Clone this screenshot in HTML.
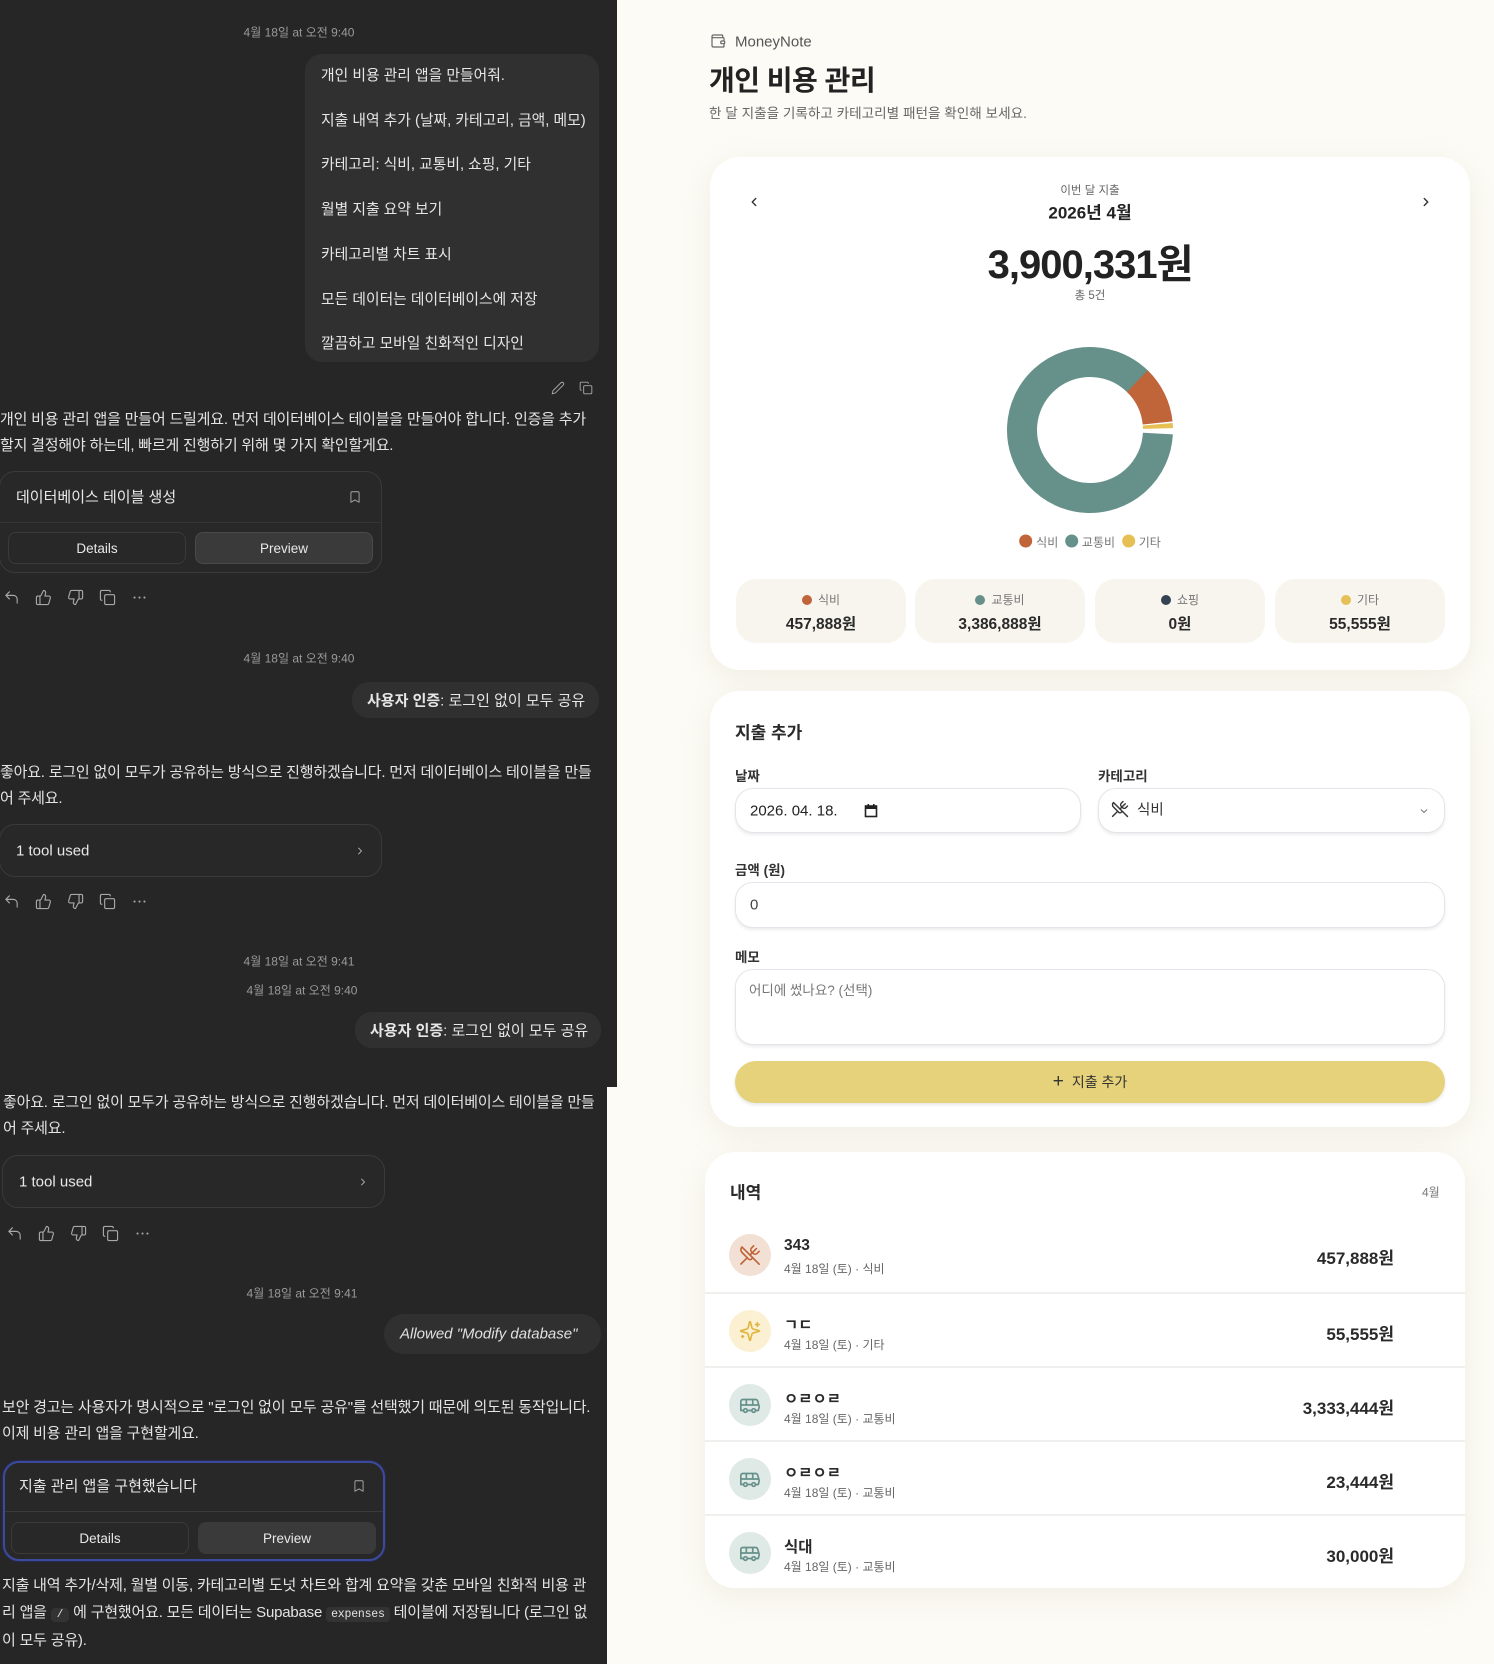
<!DOCTYPE html>
<html><head><meta charset="utf-8">
<style>
*{box-sizing:border-box;margin:0;padding:0}
html,body{width:1494px;height:1664px;overflow:hidden}
body{background:#fcfbf6;font-family:"Liberation Sans","Noto Sans CJK KR",sans-serif;position:relative}
.a{position:absolute;white-space:nowrap}
#dark{position:absolute;left:0;top:0;width:617px;height:1087px;background:#262626}
#dark2{position:absolute;left:0;top:1087px;width:607px;height:577px;background:#262626}
.ts{color:#9a9a9a;font-size:12px;transform:translate(-50%,-50%)}
.bub{background:#303030;border-radius:17px;color:#e6e6e6}
.txt{color:#e4e4e4;font-size:15px;letter-spacing:-0.2px}
.cl{transform:translateY(-50%)}
.card{border:1px solid #3a3a3a;border-radius:16px;background:#282828}
.btn{border:1px solid #3a3a3a;border-radius:8px;color:#e8e8e8;font-size:13.5px;display:flex;align-items:center;justify-content:center}
.ic{stroke:#a8a8a8;fill:none;stroke-width:1.6;stroke-linecap:round;stroke-linejoin:round}
.wc{position:absolute;background:#fff;border-radius:30px;box-shadow:0 8px 30px rgba(200,195,160,0.22)}
.lbl{font-size:13.5px;font-weight:bold;color:#333}
.inp{position:absolute;background:#fff;border:1px solid #e6e4ea;border-radius:18px;box-shadow:0 2px 3px rgba(0,0,0,0.08)}
.stat{position:absolute;top:579px;width:170px;height:64px;background:#f7f5ee;border-radius:20px;text-align:center}
.stat .t{font-size:12px;color:#777;margin-top:12px}
.stat .v{font-size:15.5px;font-weight:bold;color:#2a2a2a;margin-top:4px}
.dot{display:inline-block;width:10px;height:10px;border-radius:50%;margin-right:6px;vertical-align:-1px}
.row{position:absolute;left:705px;width:760px;height:74px;border-top:2px solid #f1f0ee}
.circ{position:absolute;left:24px;top:16px;width:42px;height:42px;border-radius:50%;display:flex;align-items:center;justify-content:center}
.nm{position:absolute;left:79px;top:19px;font-size:15.5px;font-weight:bold;color:#2a2a2a}
.sb{position:absolute;left:79px;top:42px;font-size:12px;color:#666}
.am{position:absolute;right:71px;top:26px;font-size:17px;font-weight:bold;color:#2a2a2a}
</style></head><body>
<div id="dark"></div><div id="dark2"></div>

<!-- LEFT CHAT -->
<div class="a ts" style="left:299px;top:32px">4월 18일 at 오전 9:40</div>
<div class="a bub" style="left:305px;top:54px;width:294px;height:308px"></div>
<div class="a" style="left:321px;top:54px;color:#e6e6e6;font-size:14.8px;line-height:44.7px">개인 비용 관리 앱을 만들어줘.<br>지출 내역 추가 (날짜, 카테고리, 금액, 메모)<br>카테고리: 식비, 교통비, 쇼핑, 기타<br>월별 지출 요약 보기<br>카테고리별 차트 표시<br>모든 데이터는 데이터베이스에 저장<br>깔끔하고 모바일 친화적인 디자인</div>
<svg class="a" style="left:551px;top:381px" width="14" height="14" viewBox="0 0 24 24"><path class="ic" d="M17 3a2.8 2.8 0 0 1 4 4L7.5 20.5 2 22l1.5-5.5Z"/></svg>
<svg class="a" style="left:579px;top:381px" width="14" height="14" viewBox="0 0 24 24"><rect class="ic" x="8" y="8" width="14" height="14" rx="2"/><path class="ic" d="M4 16c-1.1 0-2-.9-2-2V4c0-1.1.9-2 2-2h10c1.1 0 2 .9 2 2"/></svg>

<div class="a txt" style="left:0;top:407px;line-height:25.5px">개인 비용 관리 앱을 만들어 드릴게요. 먼저 데이터베이스 테이블을 만들어야 합니다. 인증을 추가<br>할지 결정해야 하는데, 빠르게 진행하기 위해 몇 가지 확인할게요.</div>

<div class="a card" style="left:-1px;top:471px;width:383px;height:102px"></div>
<div class="a" style="left:16px;top:486px;color:#e8e8e8;font-size:15px">데이터베이스 테이블 생성</div>
<svg class="a" style="left:348px;top:489px" width="14" height="16" viewBox="0 0 24 24"><path class="ic" d="M19 21l-7-4-7 4V5a2 2 0 0 1 2-2h10a2 2 0 0 1 2 2z"/></svg>
<div class="a" style="left:0;top:522px;width:382px;height:1px;background:#353535"></div>
<div class="a btn" style="left:8px;top:532px;width:178px;height:32px">Details</div>
<div class="a btn" style="left:195px;top:532px;width:178px;height:32px;background:#3a3a3a;border-color:#4a4a4a">Preview</div>

<div class="a" style="left:3px;top:589px">
<svg class="a" style="left:0" width="17" height="17" viewBox="0 0 24 24"><path class="ic" d="M9 14 4 9l5-5M4 9h10.5a5.5 5.5 0 0 1 5.5 5.5V20"/></svg>
<svg class="a" style="left:32px" width="17" height="17" viewBox="0 0 24 24"><path class="ic" d="M7 10v12M15 5.9 14 10h5.8a2 2 0 0 1 1.9 2.6l-2.3 8A2 2 0 0 1 17.4 22H4a2 2 0 0 1-2-2v-8a2 2 0 0 1 2-2h2.8a2 2 0 0 0 1.8-1.1L12 2a3.1 3.1 0 0 1 3 3.9Z"/></svg>
<svg class="a" style="left:64px" width="17" height="17" viewBox="0 0 24 24"><path class="ic" d="M17 14V2M9 18.1 10 14H4.2a2 2 0 0 1-1.9-2.6l2.3-8A2 2 0 0 1 6.6 2H20a2 2 0 0 1 2 2v8a2 2 0 0 1-2 2h-2.8a2 2 0 0 0-1.8 1.1L12 22a3.1 3.1 0 0 1-3-3.9Z"/></svg>
<svg class="a" style="left:96px" width="17" height="17" viewBox="0 0 24 24"><rect class="ic" x="8" y="8" width="14" height="14" rx="2"/><path class="ic" d="M4 16c-1.1 0-2-.9-2-2V4c0-1.1.9-2 2-2h10c1.1 0 2 .9 2 2"/></svg>
<svg class="a" style="left:128px" width="17" height="17" viewBox="0 0 24 24"><circle cx="5" cy="12" r="1.5" fill="#a8a8a8"/><circle cx="12" cy="12" r="1.5" fill="#a8a8a8"/><circle cx="19" cy="12" r="1.5" fill="#a8a8a8"/></svg>
</div>

<div class="a ts" style="left:299px;top:658px">4월 18일 at 오전 9:40</div>
<div class="a bub" style="left:352px;top:682px;width:247px;height:36px"></div>
<div class="a cl" style="left:367px;top:700px;color:#e6e6e6;font-size:15px"><b>사용자 인증</b>: 로그인 없이 모두 공유</div>

<div class="a txt" style="left:0;top:760px;line-height:26px">좋아요. 로그인 없이 모두가 공유하는 방식으로 진행하겠습니다. 먼저 데이터베이스 테이블을 만들<br>어 주세요.</div>
<div class="a card" style="left:-1px;top:824px;width:383px;height:53px"></div>
<div class="a cl" style="left:16px;top:851px;color:#e8e8e8;font-size:15px">1 tool used</div>
<svg class="a" style="left:354px;top:844px" width="12" height="14" viewBox="0 0 24 24"><path class="ic" style="stroke:#ccc" d="m9 18 6-6-6-6"/></svg>

<div class="a" style="left:3px;top:893px">
<svg class="a" style="left:0" width="17" height="17" viewBox="0 0 24 24"><path class="ic" d="M9 14 4 9l5-5M4 9h10.5a5.5 5.5 0 0 1 5.5 5.5V20"/></svg>
<svg class="a" style="left:32px" width="17" height="17" viewBox="0 0 24 24"><path class="ic" d="M7 10v12M15 5.9 14 10h5.8a2 2 0 0 1 1.9 2.6l-2.3 8A2 2 0 0 1 17.4 22H4a2 2 0 0 1-2-2v-8a2 2 0 0 1 2-2h2.8a2 2 0 0 0 1.8-1.1L12 2a3.1 3.1 0 0 1 3 3.9Z"/></svg>
<svg class="a" style="left:64px" width="17" height="17" viewBox="0 0 24 24"><path class="ic" d="M17 14V2M9 18.1 10 14H4.2a2 2 0 0 1-1.9-2.6l2.3-8A2 2 0 0 1 6.6 2H20a2 2 0 0 1 2 2v8a2 2 0 0 1-2 2h-2.8a2 2 0 0 0-1.8 1.1L12 22a3.1 3.1 0 0 1-3-3.9Z"/></svg>
<svg class="a" style="left:96px" width="17" height="17" viewBox="0 0 24 24"><rect class="ic" x="8" y="8" width="14" height="14" rx="2"/><path class="ic" d="M4 16c-1.1 0-2-.9-2-2V4c0-1.1.9-2 2-2h10c1.1 0 2 .9 2 2"/></svg>
<svg class="a" style="left:128px" width="17" height="17" viewBox="0 0 24 24"><circle cx="5" cy="12" r="1.5" fill="#a8a8a8"/><circle cx="12" cy="12" r="1.5" fill="#a8a8a8"/><circle cx="19" cy="12" r="1.5" fill="#a8a8a8"/></svg>
</div>

<div class="a ts" style="left:299px;top:961px">4월 18일 at 오전 9:41</div>
<div class="a ts" style="left:302px;top:990px">4월 18일 at 오전 9:40</div>
<div class="a bub" style="left:355px;top:1012px;width:246px;height:36px"></div>
<div class="a cl" style="left:370px;top:1030px;color:#e6e6e6;font-size:15px"><b>사용자 인증</b>: 로그인 없이 모두 공유</div>

<div class="a txt" style="left:3px;top:1090px;line-height:26px">좋아요. 로그인 없이 모두가 공유하는 방식으로 진행하겠습니다. 먼저 데이터베이스 테이블을 만들<br>어 주세요.</div>
<div class="a card" style="left:2px;top:1155px;width:383px;height:53px"></div>
<div class="a cl" style="left:19px;top:1182px;color:#e8e8e8;font-size:15px">1 tool used</div>
<svg class="a" style="left:357px;top:1175px" width="12" height="14" viewBox="0 0 24 24"><path class="ic" style="stroke:#ccc" d="m9 18 6-6-6-6"/></svg>

<div class="a" style="left:6px;top:1225px">
<svg class="a" style="left:0" width="17" height="17" viewBox="0 0 24 24"><path class="ic" d="M9 14 4 9l5-5M4 9h10.5a5.5 5.5 0 0 1 5.5 5.5V20"/></svg>
<svg class="a" style="left:32px" width="17" height="17" viewBox="0 0 24 24"><path class="ic" d="M7 10v12M15 5.9 14 10h5.8a2 2 0 0 1 1.9 2.6l-2.3 8A2 2 0 0 1 17.4 22H4a2 2 0 0 1-2-2v-8a2 2 0 0 1 2-2h2.8a2 2 0 0 0 1.8-1.1L12 2a3.1 3.1 0 0 1 3 3.9Z"/></svg>
<svg class="a" style="left:64px" width="17" height="17" viewBox="0 0 24 24"><path class="ic" d="M17 14V2M9 18.1 10 14H4.2a2 2 0 0 1-1.9-2.6l2.3-8A2 2 0 0 1 6.6 2H20a2 2 0 0 1 2 2v8a2 2 0 0 1-2 2h-2.8a2 2 0 0 0-1.8 1.1L12 22a3.1 3.1 0 0 1-3-3.9Z"/></svg>
<svg class="a" style="left:96px" width="17" height="17" viewBox="0 0 24 24"><rect class="ic" x="8" y="8" width="14" height="14" rx="2"/><path class="ic" d="M4 16c-1.1 0-2-.9-2-2V4c0-1.1.9-2 2-2h10c1.1 0 2 .9 2 2"/></svg>
<svg class="a" style="left:128px" width="17" height="17" viewBox="0 0 24 24"><circle cx="5" cy="12" r="1.5" fill="#a8a8a8"/><circle cx="12" cy="12" r="1.5" fill="#a8a8a8"/><circle cx="19" cy="12" r="1.5" fill="#a8a8a8"/></svg>
</div>

<div class="a ts" style="left:302px;top:1293px">4월 18일 at 오전 9:41</div>
<div class="a bub" style="left:384px;top:1314px;width:217px;height:40px;border-radius:20px"></div>
<div class="a cl" style="left:400px;top:1334px;color:#e0e0e0;font-size:15px;font-style:italic">Allowed "Modify database"</div>

<div class="a txt" style="left:2px;top:1395px;line-height:26px">보안 경고는 사용자가 명시적으로 "로그인 없이 모두 공유"를 선택했기 때문에 의도된 동작입니다.<br>이제 비용 관리 앱을 구현할게요.</div>
<div class="a card" style="left:3px;top:1461px;width:382px;height:100px;border:2px solid #3d4a9c;box-shadow:0 0 0 1px #262b55"></div>
<div class="a" style="left:19px;top:1475px;color:#e8e8e8;font-size:15px">지출 관리 앱을 구현했습니다</div>
<svg class="a" style="left:352px;top:1478px" width="14" height="16" viewBox="0 0 24 24"><path class="ic" d="M19 21l-7-4-7 4V5a2 2 0 0 1 2-2h10a2 2 0 0 1 2 2z"/></svg>
<div class="a" style="left:5px;top:1511px;width:378px;height:1px;background:#3a3a3a"></div>
<div class="a btn" style="left:11px;top:1522px;width:178px;height:32px">Details</div>
<div class="a btn" style="left:198px;top:1522px;width:178px;height:32px;background:#3a3a3a;border-color:#3a3a3a">Preview</div>
<div class="a txt" style="left:2px;top:1573px;line-height:26.5px">지출 내역 추가/삭제, 월별 이동, 카테고리별 도넛 차트와 합계 요약을 갖춘 모바일 친화적 비용 관<br>리 앱을 <span style="background:#333;border-radius:4px;padding:1px 6px;font-family:'Liberation Mono',monospace;font-size:11px">/</span> 에 구현했어요. 모든 데이터는 Supabase <span style="background:#333;border-radius:4px;padding:1px 5px;font-family:'Liberation Mono',monospace;font-size:11.5px">expenses</span> 테이블에 저장됩니다 (로그인 없<br>이 모두 공유).</div>

<!-- RIGHT APP -->
<svg class="a" style="left:710px;top:33px" width="16" height="16" viewBox="0 0 24 24"><path fill="none" stroke="#666" stroke-width="1.8" stroke-linecap="round" stroke-linejoin="round" d="M19 7V4a1 1 0 0 0-1-1H5a2 2 0 0 0 0 4h15a1 1 0 0 1 1 1v4h-3a2 2 0 0 0 0 4h3a1 1 0 0 0 1-1v-2a1 1 0 0 0-1-1M3 5v14a2 2 0 0 0 2 2h15a1 1 0 0 0 1-1v-4"/></svg>
<div class="a cl" style="left:735px;top:42px;font-size:15px;color:#555">MoneyNote</div>
<div class="a cl" style="left:709px;top:79px;font-size:28px;font-weight:bold;color:#222;letter-spacing:-0.5px">개인 비용 관리</div>
<div class="a cl" style="left:709px;top:112px;font-size:13.6px;color:#666">한 달 지출을 기록하고 카테고리별 패턴을 확인해 보세요.</div>

<div class="wc" style="left:710px;top:157px;width:760px;height:513px"></div>
<svg class="a" style="left:747px;top:194px" width="14" height="16" viewBox="0 0 24 24"><path fill="none" stroke="#333" stroke-width="2.4" stroke-linecap="round" stroke-linejoin="round" d="m15 18-6-6 6-6"/></svg>
<svg class="a" style="left:1419px;top:194px" width="14" height="16" viewBox="0 0 24 24"><path fill="none" stroke="#333" stroke-width="2.4" stroke-linecap="round" stroke-linejoin="round" d="m9 18 6-6-6-6"/></svg>
<div class="a" style="left:1090px;top:190px;transform:translate(-50%,-50%);font-size:11.5px;color:#666">이번 달 지출</div>
<div class="a" style="left:1090px;top:211px;transform:translate(-50%,-50%);font-size:17px;font-weight:bold;color:#222">2026년 4월</div>
<div class="a" style="left:1090px;top:261px;transform:translate(-50%,-50%);font-size:40px;font-weight:bold;color:#222;letter-spacing:-1px">3,900,331원</div>
<div class="a" style="left:1090px;top:295px;transform:translate(-50%,-50%);font-size:11.5px;color:#666">총 5건</div>

<svg class="a" style="left:1000px;top:340px" width="180" height="180" viewBox="-90 -90 180 180">
<circle r="68" fill="none" stroke="#66908a" stroke-width="30" stroke-dasharray="369.5 1000" transform="rotate(3)"/>
<circle r="68" fill="none" stroke="#c0643a" stroke-width="30" stroke-dasharray="47.5 1000" transform="rotate(-46)"/>
<circle r="68" fill="none" stroke="#e6bf55" stroke-width="30" stroke-dasharray="4.2 1000" transform="rotate(-4.8)"/>
</svg>
<div class="a" style="left:1090px;top:542px;transform:translate(-50%,-50%);font-size:12px;color:#777">
<span class="dot" style="background:#c0643a;width:13px;height:13px;margin-right:4px"></span>식비&nbsp;&nbsp;<span class="dot" style="background:#66908a;width:13px;height:13px;margin-right:4px"></span>교통비&nbsp;&nbsp;<span class="dot" style="background:#e6bf55;width:13px;height:13px;margin-right:4px"></span>기타</div>

<div class="stat" style="left:736px"><div class="t"><span class="dot" style="background:#c0643a"></span>식비</div><div class="v">457,888원</div></div>
<div class="stat" style="left:915px"><div class="t"><span class="dot" style="background:#66908a"></span>교통비</div><div class="v">3,386,888원</div></div>
<div class="stat" style="left:1095px"><div class="t"><span class="dot" style="background:#354256"></span>쇼핑</div><div class="v">0원</div></div>
<div class="stat" style="left:1275px"><div class="t"><span class="dot" style="background:#e6bf55"></span>기타</div><div class="v">55,555원</div></div>

<div class="wc" style="left:710px;top:691px;width:760px;height:436px"></div>
<div class="a cl" style="left:735px;top:731px;font-size:17px;font-weight:bold;color:#2a2a2a">지출 추가</div>
<div class="a cl lbl" style="left:735px;top:775px">날짜</div>
<div class="a cl lbl" style="left:1098px;top:775px">카테고리</div>
<div class="inp" style="left:735px;top:788px;width:346px;height:45px"></div>
<div class="a cl" style="left:750px;top:811px;font-size:15px;color:#222">2026. 04. 18.</div>
<svg class="a" style="left:864px;top:803px" width="14" height="15" viewBox="0 0 14 15"><rect x="1.5" y="3" width="11" height="10.5" fill="none" stroke="#222" stroke-width="1.6"/><rect x="1.5" y="3" width="11" height="3" fill="#222"/><rect x="3.5" y="1" width="1.6" height="3" fill="#222"/><rect x="9" y="1" width="1.6" height="3" fill="#222"/></svg>
<div class="inp" style="left:1098px;top:788px;width:347px;height:45px"></div>
<svg class="a" style="left:1111px;top:800px" width="18" height="18" viewBox="0 0 24 24"><g fill="none" stroke="#333" stroke-width="1.9" stroke-linecap="round" stroke-linejoin="round"><path d="m16 2-2.3 2.3a3 3 0 0 0 0 4.2l1.8 1.8a3 3 0 0 0 4.2 0L22 8"/><path d="M15 15 3.3 3.3a4.2 4.2 0 0 0 0 6l7.3 7.3c.7.7 2 .7 2.8 0L15 15Zm0 0 7 7"/><path d="m2.1 21.8 6.4-6.3"/><path d="m19 5-7 7"/></g></svg>
<div class="a cl" style="left:1137px;top:809px;font-size:14.5px;color:#333">식비</div>
<svg class="a" style="left:1418px;top:805px" width="12" height="12" viewBox="0 0 24 24"><path fill="none" stroke="#777" stroke-width="2" d="m6 9 6 6 6-6"/></svg>
<div class="a cl lbl" style="left:735px;top:869px">금액 (원)</div>
<div class="inp" style="left:735px;top:882px;width:710px;height:46px"></div>
<div class="a cl" style="left:750px;top:905px;font-size:15px;color:#444">0</div>
<div class="a cl lbl" style="left:735px;top:956px">메모</div>
<div class="inp" style="left:735px;top:969px;width:710px;height:76px"></div>
<div class="a cl" style="left:749px;top:989px;font-size:13.5px;color:#777">어디에 썼나요? (선택)</div>
<div class="a" style="left:735px;top:1061px;width:710px;height:42px;border-radius:21px;background:#e6d27a;box-shadow:0 2px 3px rgba(0,0,0,0.1);display:flex;align-items:center;justify-content:center;font-size:14px;color:#333"><span style="font-size:19px;margin-right:8px;font-weight:300">+</span>지출 추가</div>

<div class="wc" style="left:705px;top:1152px;width:760px;height:436px;overflow:hidden"></div>
<div class="a cl" style="left:730px;top:1191px;font-size:17px;font-weight:bold;color:#2a2a2a">내역</div>
<div class="a cl" style="left:1422px;top:1192px;font-size:12px;color:#777">4월</div>

<div class="row" style="top:1218px;border-top:none">
<div class="circ" style="background:#f3e0d5"><svg width="22" height="22" viewBox="0 0 24 24"><g fill="none" stroke="#c0643a" stroke-width="1.8" stroke-linecap="round" stroke-linejoin="round"><path d="m16 2-2.3 2.3a3 3 0 0 0 0 4.2l1.8 1.8a3 3 0 0 0 4.2 0L22 8"/><path d="M15 15 3.3 3.3a4.2 4.2 0 0 0 0 6l7.3 7.3c.7.7 2 .7 2.8 0L15 15Zm0 0 7 7"/><path d="m2.1 21.8 6.4-6.3"/><path d="m19 5-7 7"/></g></svg></div>
<div class="nm">343</div><div class="sb">4월 18일 (토) · 식비</div><div class="am">457,888원</div></div>

<div class="row" style="top:1292px">
<div class="circ" style="background:#fbf0d2"><svg width="22" height="22" viewBox="0 0 24 24"><g fill="none" stroke="#e0b640" stroke-width="1.8" stroke-linecap="round" stroke-linejoin="round"><path d="M9.9 15.5A2 2 0 0 0 8.5 14.1l-6.1-1.6a.5.5 0 0 1 0-1L8.5 9.9A2 2 0 0 0 9.9 8.5l1.6-6.1a.5.5 0 0 1 1 0l1.6 6.1a2 2 0 0 0 1.4 1.4l6.1 1.6a.5.5 0 0 1 0 1l-6.1 1.6a2 2 0 0 0-1.4 1.4l-1.6 6.1a.5.5 0 0 1-1 0z"/><path d="M20 3v4M22 5h-4M4 17v2M5 18H3"/></g></svg></div>
<div class="nm">ㄱㄷ</div><div class="sb">4월 18일 (토) · 기타</div><div class="am">55,555원</div></div>

<div class="row" style="top:1366px">
<div class="circ" style="background:#dfe9e6"><svg width="22" height="22" viewBox="0 0 24 24"><g fill="none" stroke="#66908a" stroke-width="1.8" stroke-linecap="round" stroke-linejoin="round"><path d="M8 6v6M15 6v6M2 12h19.6M18 18h3s.5-1.7.8-2.8c.1-.4.2-.8.2-1.2s-.1-.8-.2-1.2l-1.4-5C20.1 6.8 19.1 6 18 6H4a2 2 0 0 0-2 2v10h3"/><circle cx="7" cy="18" r="2"/><path d="M9 18h5"/><circle cx="16" cy="18" r="2"/></g></svg></div>
<div class="nm">ㅇㄹㅇㄹ</div><div class="sb">4월 18일 (토) · 교통비</div><div class="am">3,333,444원</div></div>

<div class="row" style="top:1440px">
<div class="circ" style="background:#dfe9e6"><svg width="22" height="22" viewBox="0 0 24 24"><g fill="none" stroke="#66908a" stroke-width="1.8" stroke-linecap="round" stroke-linejoin="round"><path d="M8 6v6M15 6v6M2 12h19.6M18 18h3s.5-1.7.8-2.8c.1-.4.2-.8.2-1.2s-.1-.8-.2-1.2l-1.4-5C20.1 6.8 19.1 6 18 6H4a2 2 0 0 0-2 2v10h3"/><circle cx="7" cy="18" r="2"/><path d="M9 18h5"/><circle cx="16" cy="18" r="2"/></g></svg></div>
<div class="nm">ㅇㄹㅇㄹ</div><div class="sb">4월 18일 (토) · 교통비</div><div class="am">23,444원</div></div>

<div class="row" style="top:1514px">
<div class="circ" style="background:#dfe9e6"><svg width="22" height="22" viewBox="0 0 24 24"><g fill="none" stroke="#66908a" stroke-width="1.8" stroke-linecap="round" stroke-linejoin="round"><path d="M8 6v6M15 6v6M2 12h19.6M18 18h3s.5-1.7.8-2.8c.1-.4.2-.8.2-1.2s-.1-.8-.2-1.2l-1.4-5C20.1 6.8 19.1 6 18 6H4a2 2 0 0 0-2 2v10h3"/><circle cx="7" cy="18" r="2"/><path d="M9 18h5"/><circle cx="16" cy="18" r="2"/></g></svg></div>
<div class="nm">식대</div><div class="sb">4월 18일 (토) · 교통비</div><div class="am">30,000원</div></div>

</body></html>
